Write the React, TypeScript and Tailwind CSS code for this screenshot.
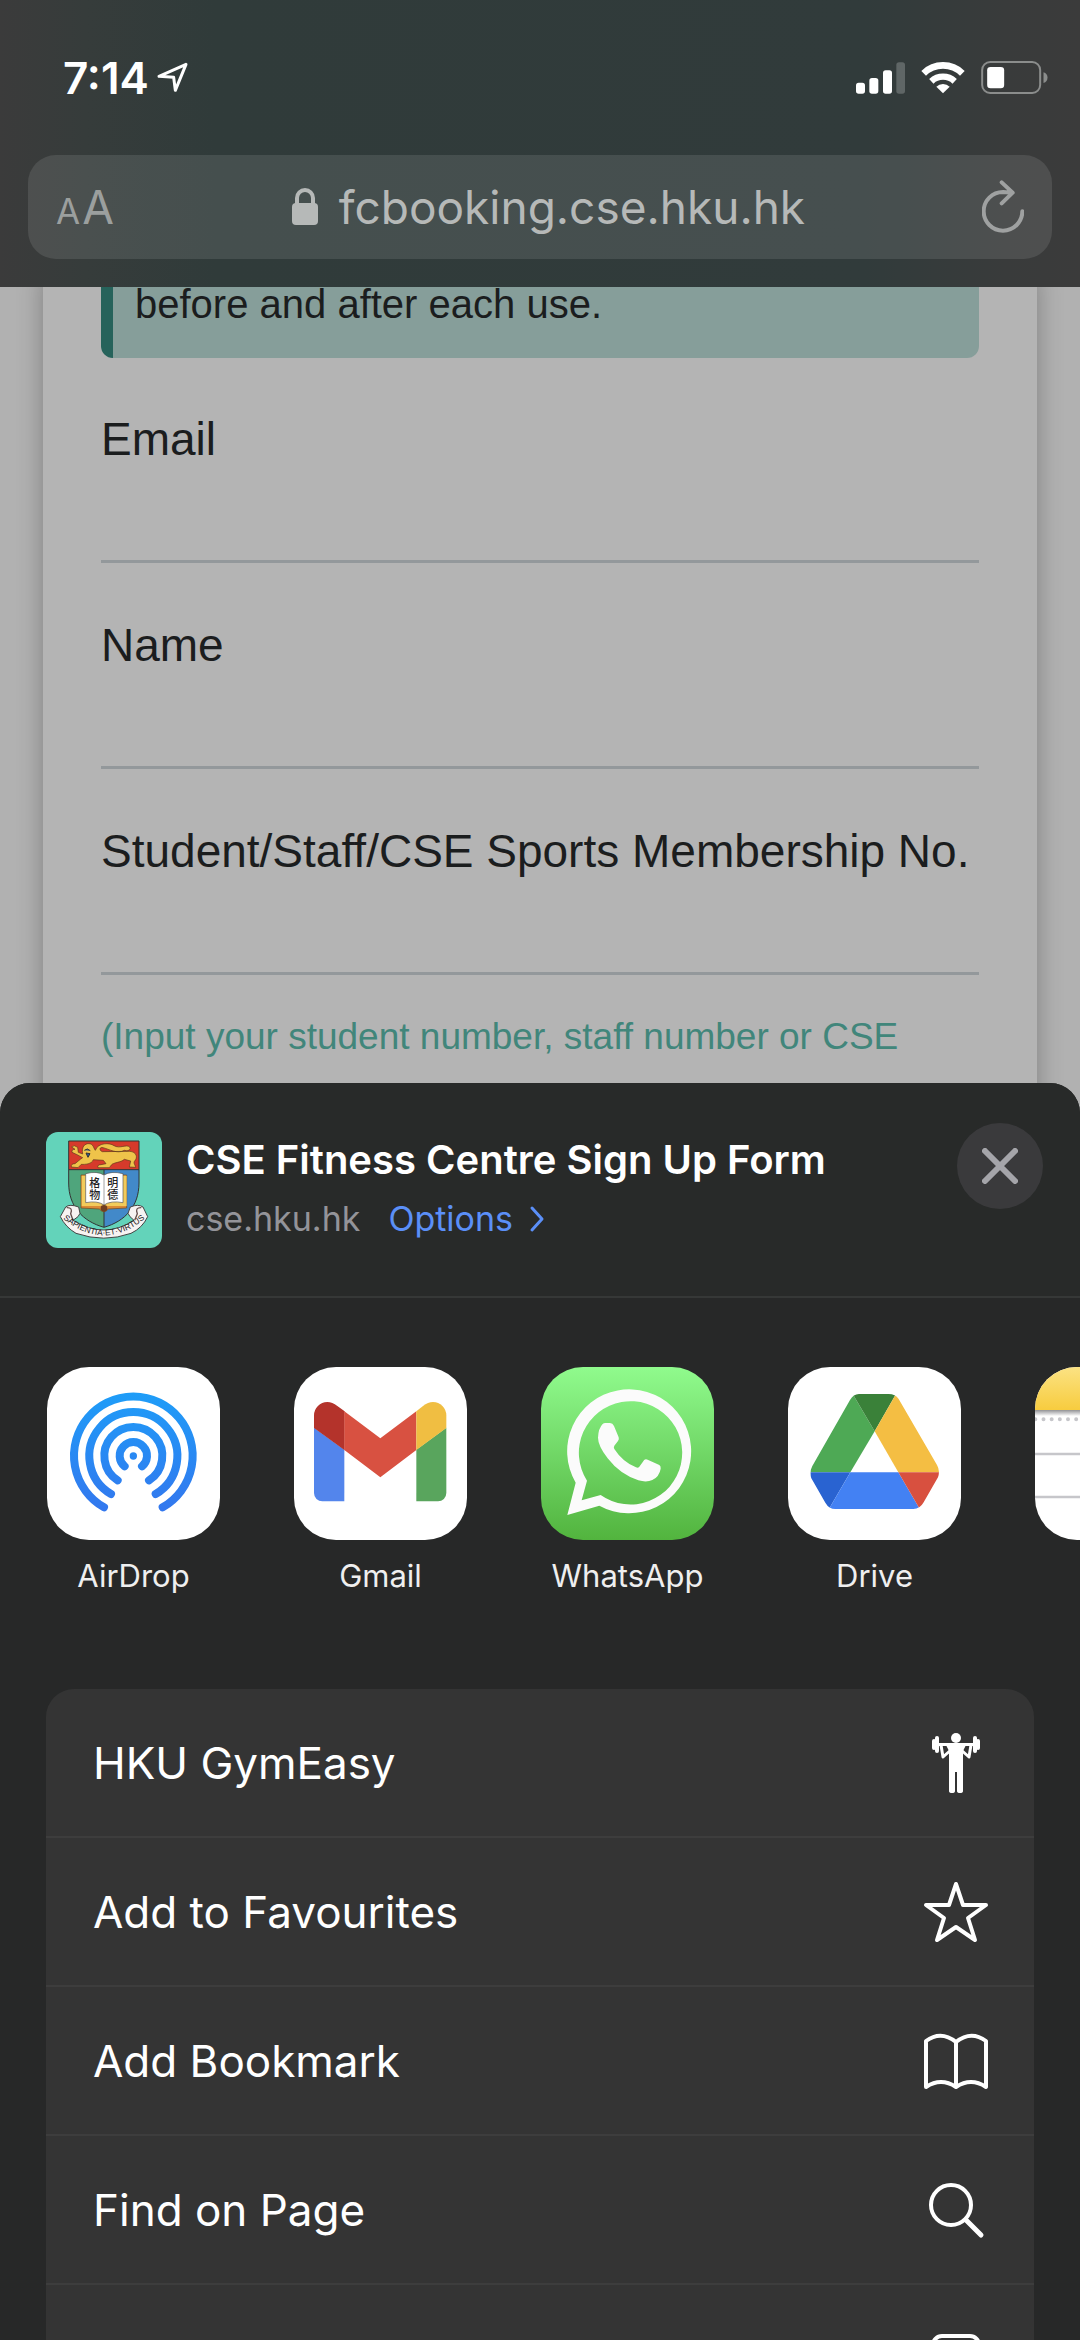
import type { ReactNode } from "react";

function LocationIcon() {
  return (
    <svg className="h-8 w-8" viewBox="0 0 96 96" fill="none" stroke="white" strokeWidth="9" strokeLinejoin="round" aria-hidden="true">
      <path d="M87 7 6 43l44 3 5 39Z" />
    </svg>
  );
}

function StatusIcons() {
  return (
    <div className="flex items-center gap-4">
      <svg className="h-8 w-[49px]" viewBox="0 0 147 96" fill="white" aria-label="Signal">
        <rect x="0" y="62" width="27" height="33" rx="8" />
        <rect x="40" y="48" width="27" height="47" rx="8" />
        <rect x="81" y="25" width="27" height="70" rx="8" />
        <rect x="121" y="1" width="26" height="94" rx="8" opacity="0.22" />
      </svg>
      <svg className="h-[33px] w-11" viewBox="0 0 132 99" fill="none" stroke="white" aria-label="Wi-Fi">
        <path d="M8 37a83 83 0 0 1 116 0" strokeWidth="20" />
        <path d="M31 61a51 51 0 0 1 70 0" strokeWidth="19" />
        <path d="m66 97-20-20a29 29 0 0 1 40 0Z" fill="white" stroke="none" />
      </svg>
      <svg className="h-[33px] w-[67px]" viewBox="0 0 200 99" aria-label="Battery">
        <rect x="3" y="3" width="174" height="93" rx="24" fill="none" stroke="#8b8d8c" strokeWidth="6" />
        <rect x="18" y="18" width="51" height="64" rx="10" fill="white" />
        <path d="M187 34q12 4 12 16t-12 16Z" fill="#8b8d8c" />
      </svg>
    </div>
  );
}

function BrowserHeader() {
  return (
    <header className="bg-[linear-gradient(90deg,#3b3b3b_0%,#363c3b_8%,#303b3a_20%,#313b3b_80%,#393b3b_93%,#3b3b3b_100%)] px-7 pb-7">
      <div className="flex h-[155px] items-center justify-between pr-1 pl-[35px]">
        <div className="flex items-center gap-2">
          <time className="text-[44px] leading-[52px] font-semibold text-white">7:14</time>
          <LocationIcon />
        </div>
        <StatusIcons />
      </div>
      <div className="flex h-[104px] items-center justify-between rounded-[28px] bg-white/10 px-7 text-[#b6b9b8]">
        <button type="button" aria-label="Page settings" className="flex items-baseline gap-0.5 leading-none text-[#9b9f9e]">
          <span className="text-[35px]">A</span>
          <span className="text-[46px]">A</span>
        </button>
        <div className="flex items-center gap-5">
          <svg className="h-10 w-7" viewBox="0 0 28 40" aria-hidden="true">
            <rect x="1" y="16" width="26" height="22" rx="4" fill="currentColor" />
            <path d="M6 18v-7a8 8 0 0 1 16 0v7" fill="none" stroke="currentColor" strokeWidth="4" />
          </svg>
          <span className="text-[46px] leading-[60px]">fcbooking.cse.hku.hk</span>
        </div>
        <button type="button" aria-label="Reload" className="text-[#9fa1a1]">
          <svg className="h-[54px] w-[42px]" viewBox="0 0 126 162" fill="none" stroke="currentColor" strokeWidth="12" strokeLinecap="round" strokeLinejoin="round" aria-hidden="true">
            <path d="M121 94a58 58 0 1 1-58-58l28 2M59 7l33 31-33 32" />
          </svg>
        </button>
      </div>
    </header>
  );
}

function Field({ id, label }: { id: string; label: string }) {
  return (
    <div className="flex flex-col">
      <label htmlFor={id} className="text-[46px] leading-[60px] whitespace-nowrap">{label}</label>
      <input id={id} className="h-[94px] border-b-3 border-[#93989b] bg-transparent text-[46px] outline-none" />
    </div>
  );
}

function SignUpPage() {
  return (
    <main className="overflow-hidden bg-[#b1b1b1] px-[43px] font-['Liberation_Sans',Arial,sans-serif] text-[#1b1d1e]">
      <div className="bg-[#b4b4b4] px-[58px] pb-[50px] shadow-[0_0_24px_rgba(0,0,0,0.28)]">
        <p className="-mt-3 rounded-xl border-l-[12px] border-[#26635b] bg-[#869e9a] pb-[25px] pl-[22px] text-[40px] leading-[58px]">
          before and after each use.
        </p>
        <form className="flex flex-col gap-[52px] pt-[51px]">
          <Field id="email" label="Email" />
          <Field id="name" label="Name" />
          <Field id="member" label="Student/Staff/CSE Sports Membership No." />
        </form>
        <p className="pt-[34px] text-[37px] leading-[56px] whitespace-nowrap text-[#41867b]">
          (Input your student number, staff number or CSE
        </p>
      </div>
    </main>
  );
}

function Crest() {
  return (
    <svg className="size-[116px] shrink-0 rounded-xl" viewBox="48 37 348 348" aria-label="HKU crest">
      <defs>
        <clipPath id="shield">
          <path d="M116 64H327V190C327 260 285 305 222 323C158 305 116 260 116 190Z" />
        </clipPath>
        <path id="motto" d="M99 297Q222 397 345 297" />
      </defs>
      <rect x="48" y="37" width="348" height="348" fill="#63d3ba" />
      <g clipPath="url(#shield)">
        <rect x="116" y="64" width="106" height="270" fill="#4fa57c" />
        <rect x="222" y="64" width="106" height="270" fill="#4289c9" />
        <rect x="116" y="64" width="212" height="86" fill="#d63a2b" />
        <path d="M116 150H328M222 150V323" stroke="#333" strokeWidth="3" />
      </g>
      <g fill="#efc34a" stroke="#5c3a1c" strokeWidth="2" strokeLinejoin="round">
        <path d="M196 92C204 68 240 69 252 78C270 88 289 73 299 82C305 90 293 96 283 92C262 104 236 88 219 84C207 81 208 93 217 96L299 95C320 96 324 114 314 124C309 130 316 136 317 143L298 142L302 124L283 119C273 129 250 128 244 136L238 144L204 144Q201 135 213 135L228 132L220 122L190 120C186 133 165 135 154 134L144 144L124 142Q122 132 135 132L151 119L158 114L141 105L126 98Q124 89 135 89L125 82Q132 74 143 83L145 98L158 103C154 82 164 71 177 72C191 73 190 85 196 92Z" />
      </g>
      <path d="M163 92l9-4 9 5M168 100l12 2-6 11Z" fill="#315b91" stroke="#333" strokeWidth="3" />
      <path d="M116 64H327V190C327 260 285 305 222 323C158 305 116 260 116 190Z" fill="none" stroke="#333" strokeWidth="3" />
      <path d="M153 166H290V265L235 268Q222 284 208 268L153 265Z" fill="#da8a35" stroke="#70441e" strokeWidth="2" />
      <path d="M155 168H168V248Q202 242 222 257Q242 242 278 248V168H290V259H155Z" fill="#f2cb5b" />
      <path d="M167 162Q202 153 222 166Q242 153 279 162V249Q242 242 222 256Q202 242 167 249Z" fill="#fff" stroke="#555" strokeWidth="2" />
      <path d="M222 166V256" stroke="#777" strokeWidth="2" />
      <circle cx="222" cy="266" r="10" fill="#713e20" />
      <g fill="#222" fontFamily="Noto Sans CJK TC, sans-serif" fontSize="33" fontWeight="500">
        <text x="178" y="203">格</text>
        <text x="178" y="239">物</text>
        <text x="232" y="203">明</text>
        <text x="232" y="239">德</text>
      </g>
      <path d="M91 291L107 262Q119 252 146 262L150 281L144 291L129 302Q222 360 312 302L300 291L294 281L301 262Q325 252 339 262L353 291Q337 325 303 341Q222 370 138 341Q107 323 91 291Z" fill="#f7f3f2" stroke="#444" strokeWidth="3" strokeLinejoin="round" />
      <path d="M110 264Q130 263 122 282L129 302M334 264Q314 263 322 282L314 302" fill="none" stroke="#654f4d" strokeWidth="4" />
      <text fill="#222" fontFamily="Liberation Sans, sans-serif" fontSize="25" fontWeight="400">
        <textPath href="#motto" startOffset="50%" textAnchor="middle">SAPIENTIA·ET·VIRTUS</textPath>
      </text>
    </svg>
  );
}

function SheetHeader() {
  return (
    <div className="flex h-[215px] items-start gap-6 border-b-2 border-[#363837] bg-[#282a29] pr-[37px] pl-[46px]">
      <div className="pt-[49px]"><Crest /></div>
      <div className="flex min-w-0 flex-1 flex-col pt-[50px]">
        <h1 className="text-[40px] leading-[54px] font-semibold whitespace-nowrap text-white">CSE Fitness Centre Sign Up Form</h1>
        <div className="flex items-center gap-7 pt-1 text-[34px] leading-[56px] text-[#949499]">
          <span>cse.hku.hk</span>
          <button type="button" className="flex items-center gap-4 text-[#5b8ff7]">
            Options
            <svg className="h-7 w-4" viewBox="0 0 16 28" fill="none" stroke="currentColor" strokeWidth="3" strokeLinecap="round" strokeLinejoin="round" aria-hidden="true">
              <path d="m3 3 10 11L3 25" />
            </svg>
          </button>
        </div>
      </div>
      <div className="pt-10">
        <button type="button" aria-label="Close" className="flex size-[86px] items-center justify-center rounded-full bg-[#3a3a3c] text-[#a5a5aa]">
          <svg className="size-9" viewBox="0 0 36 36" stroke="currentColor" strokeWidth="6" strokeLinecap="round" aria-hidden="true">
            <path d="m3 3 30 30M33 3 3 33" />
          </svg>
        </button>
      </div>
    </div>
  );
}

const AirDropArt = (
  <svg viewBox="19 21 519 519" fill="none" stroke="url(#airdrop)" strokeWidth="24" strokeLinecap="round" aria-hidden="true">
    <defs>
      <linearGradient id="airdrop" gradientUnits="userSpaceOnUse" x1="278" y1="98" x2="278" y2="454">
        <stop stopColor="#1e9df8" />
        <stop offset="1" stopColor="#3377ee" />
      </linearGradient>
    </defs>
    <path d="M190 442A178 178 0 1 1 366 442" />
    <path d="M211 402A132 132 0 1 1 345 402" />
    <path d="M231 361A87 87 0 1 1 325 361" />
    <path d="M252 319A41 41 0 1 1 304 319" />
    <circle cx="278" cy="288" r="11" fill="url(#airdrop)" stroke="none" />
  </svg>
);

const GmailArt = (
  <svg viewBox="25 21 519 519" aria-hidden="true">
    <path fill="#5385ec" d="M85 203 176 269V424H110A25 25 0 0 1 85 399Z" />
    <path fill="#59a55d" d="M482 203 392 269V424H457A25 25 0 0 0 482 399Z" />
    <path fill="#b4332b" d="M85 204V166A40 40 0 0 1 125 126Q140 126 155 138L177 154V271Z" />
    <path fill="#d85141" d="M176 154 284 235 392 154V270L284 352 176 270Z" />
    <path fill="#f0be42" d="M392 154 412 138Q427 126 442 126A40 40 0 0 1 482 166V204L392 270Z" />
  </svg>
);

const WhatsAppArt = (
  <svg viewBox="33 21 519 519" fill="#fbfbfb" aria-hidden="true">
    <path fillRule="evenodd" d="M112 465 137 368A186 186 0 1 1 208 437ZM155 421 212 405A155 155 0 1 0 171 362Z" />
    <path d="M226 189H240Q248 189 252 198L266 232Q268 238 264 243L253 257Q250 262 253 267Q278 306 318 322Q324 325 328 320L342 301Q346 296 353 299L388 315Q393 318 392 326Q388 350 367 360Q350 368 325 361Q270 343 233 295Q204 257 204 233Q205 205 218 192Q221 189 226 189Z" />
  </svg>
);

const DriveArt = (
  <svg viewBox="24 51 519 519" aria-hidden="true">
    <defs>
      <clipPath id="drive-hull">
        <path d="M237 132H326Q346 132 356 147L471 345Q481 362 474 382L431 457Q420 477 400 477H166Q147 477 136 458L94 385Q87 367 97 348L210 150Q220 132 237 132Z" />
      </clipPath>
    </defs>
    <g clipPath="url(#drive-hull)">
      <path fill="#4ea955" d="M214 125 80 367H211L284 244Z" />
      <path fill="#3a8139" d="M214 125H352L284 244Z" />
      <path fill="#f4be43" d="M352 125 284 244 355 367H490Z" />
      <path fill="#2963d1" d="M80 367H211L145 480H80Z" />
      <path fill="#4381f3" d="M211 367H355L421 480H145Z" />
      <path fill="#d8503f" d="M355 367H490V480H421Z" />
    </g>
  </svg>
);

const NotesArt = (
  <svg viewBox="0 0 519 519" aria-hidden="true">
    <defs>
      <linearGradient id="notes-top" x1="0" y1="0" x2="0" y2="1">
        <stop stopColor="#fbe283" />
        <stop offset="1" stopColor="#f7cc3e" />
      </linearGradient>
      <linearGradient id="notes-shade" x1="0" y1="0" x2="0" y2="1">
        <stop stopColor="#929295" />
        <stop offset="1" stopColor="#fff" />
      </linearGradient>
    </defs>
    <rect width="519" height="130" fill="url(#notes-top)" />
    <rect y="129" width="519" height="18" fill="url(#notes-shade)" />
    <path d="M1 157H519" stroke="#c6c6ca" strokeWidth="12" strokeLinecap="round" strokeDasharray="0 24.5" />
    <path d="M0 261H519M0 390H519" stroke="#c6c6ca" strokeWidth="8" />
  </svg>
);

const apps: { name: string; art: ReactNode; tile: string }[] = [
  { name: "AirDrop", art: AirDropArt, tile: "bg-white" },
  { name: "Gmail", art: GmailArt, tile: "bg-white" },
  { name: "WhatsApp", art: WhatsAppArt, tile: "bg-linear-to-b from-[#90fb8d] to-[#52b43e]" },
  { name: "Drive", art: DriveArt, tile: "bg-white" },
  { name: "Notes", art: NotesArt, tile: "bg-white" },
];

function AppRow() {
  return (
    <div className="flex gap-[74px] overflow-hidden pt-[69px] pl-[47px]">
      {apps.map((app) => (
        <button key={app.name} type="button" className="flex w-[173px] shrink-0 flex-col items-center gap-4">
          <span className={`size-[173px] overflow-hidden rounded-[42px] ${app.tile}`}>{app.art}</span>
          <span className="text-[31px] leading-[40px] text-[#efefef]">{app.name}</span>
        </button>
      ))}
    </div>
  );
}

const LifterIcon = (
  <svg className="size-16" viewBox="0 0 64 64" fill="white" aria-hidden="true">
    <ellipse cx="32" cy="7" rx="5" ry="5" />
    <rect x="10" y="12" width="44" height="3" />
    <rect x="11" y="5" width="4" height="17" rx="2" />
    <rect x="8" y="8" width="4" height="11" rx="2" />
    <rect x="49" y="5" width="4" height="17" rx="2" />
    <rect x="52" y="8" width="4" height="11" rx="2" />
    <path d="M17 14 19 26 28 18M47 14 45 26 36 18" fill="none" stroke="white" strokeWidth="3" strokeLinejoin="round" />
    <path d="M22 14H42L39 20V60Q39 62 36 62Q33 62 33 60V41H31V60Q31 62 28 62Q25 62 25 60V20Z" />
  </svg>
);

const StarIcon = (
  <svg className="h-16 w-[68px]" viewBox="0 0 68 64" fill="none" stroke="white" strokeWidth="4" strokeLinejoin="round" aria-hidden="true">
    <path d="M34 4 41 25H64L46 38 53 60 34 47 15 60 22 38 4 25H27Z" />
  </svg>
);

const BookIcon = (
  <svg className="h-16 w-[68px]" viewBox="0 0 68 64" fill="none" stroke="white" strokeWidth="4" strokeLinejoin="round" aria-hidden="true">
    <path d="M34 13Q19 1 4 12V58Q19 48 34 58Q49 48 64 58V12Q49 1 34 13V58" />
  </svg>
);

const SearchIcon = (
  <svg className="size-16" viewBox="0 0 64 64" fill="none" stroke="white" strokeLinecap="round" aria-hidden="true">
    <circle cx="27" cy="27" r="20" strokeWidth="4" />
    <path d="m42 42 15 15" strokeWidth="5" />
  </svg>
);

const AddSquareIcon = (
  <svg className="size-14" viewBox="0 0 56 56" fill="none" stroke="white" strokeWidth="4" strokeLinecap="round" aria-hidden="true">
    <rect x="5" y="5" width="46" height="46" rx="9" />
    <path d="M28 17v22M17 28h22" />
  </svg>
);

const actions: { id: string; label: string; icon: ReactNode }[] = [
  { id: "gym", label: "HKU GymEasy", icon: LifterIcon },
  { id: "favourite", label: "Add to Favourites", icon: StarIcon },
  { id: "bookmark", label: "Add Bookmark", icon: BookIcon },
  { id: "find", label: "Find on Page", icon: SearchIcon },
  { id: "more", label: "", icon: AddSquareIcon },
];

function ActionList() {
  return (
    <ul className="mx-[46px] mt-[93px] divide-y-2 divide-[#3d3d3d] overflow-hidden rounded-t-[28px] bg-[#343434]">
      {actions.map((action) => (
        <li key={action.id}>
          <button type="button" aria-label={action.label || "More"} className="flex h-[147px] w-full items-center justify-between pr-11 pl-[47px] text-[44px] text-white">
            <span>{action.label}</span>
            <span className="flex w-[68px] justify-center">{action.icon}</span>
          </button>
        </li>
      ))}
    </ul>
  );
}

export default function App() {
  return (
    <div className="h-screen overflow-hidden bg-[#272827] font-['Inter',sans-serif]">
      <BrowserHeader />
      <SignUpPage />
      <section aria-label="Share" className="relative -mt-8 overflow-hidden rounded-t-[30px] bg-[#272828]">
        <SheetHeader />
        <AppRow />
        <ActionList />
      </section>
    </div>
  );
}
